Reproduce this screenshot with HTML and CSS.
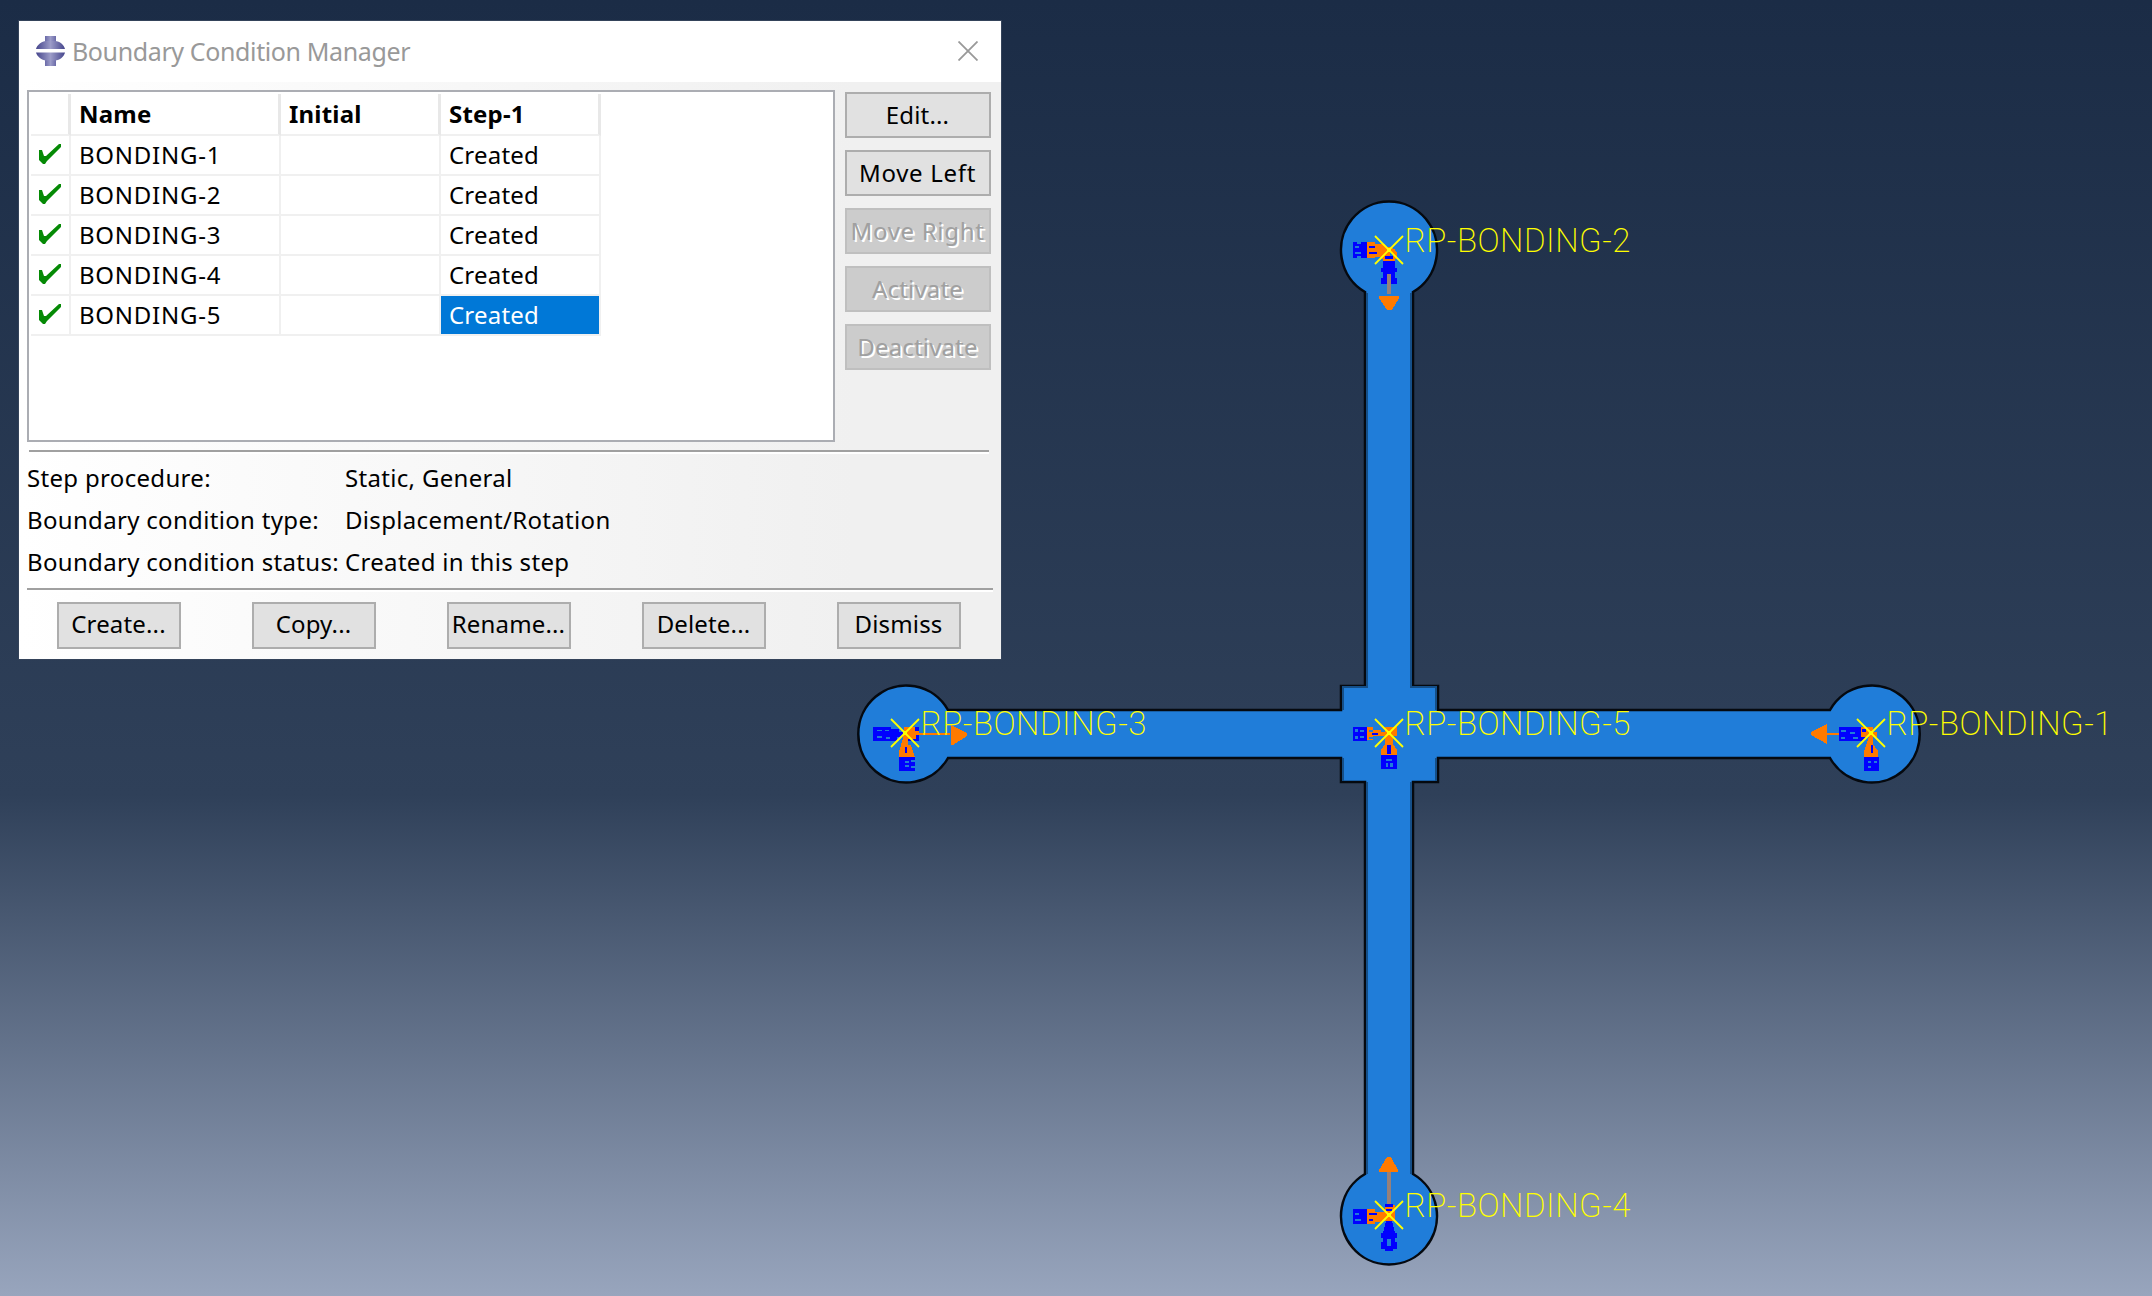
FILE: index.html
```
<!DOCTYPE html>
<html lang="en">
<head>
<meta charset="utf-8">
<title>Boundary Condition Manager</title>
<link rel="stylesheet" href="styles.css">
</head>
<body>
<main class="viewport">
<svg class="scene" width="2152" height="1296" viewBox="0 0 2152 1296">
  <defs>
    <path id="cross" class="rp" d="M-14-14L14 14M14-14L-14 14"/>
  </defs>
  <path class="part" d="M1365 292A48 48.500 0 1 1 1413 292V686H1438V710H1830A48 48.500 0 1 1 1830 758H1438V782H1413V1174A48 48.500 0 1 1 1365 1174V782H1341V758H948A48 48.500 0 1 1 948 710H1341V686H1365Z"/>
  <path class="shade" d="M1367 293V687H1343V710M1411 293V687H1436V710M1343 758V781M1436 758V781M1367 782V1174M1411 782V1174"/>

  <g shape-rendering="crispEdges">
    <g>
      <path class="blue" d="M1353 242h4v2h4v-2h6v16h-6v-2h-4v2h-4z"/>
      <path class="orange" d="M1367 242h8v2h9l6 5v8h-15v1h-8z"/>
      <path class="blue" d="M1369 246h6v2h-6zM1369 252h8v2h-8z"/>
      <path class="sky" d="M1355 246h4v2h-4zM1355 252h6v2h-6z"/>
      <circle class="ring" cx="1389" cy="255" r="6"/><path class="blue" d="M1385 256h8v3h-8zM1383 261h12v7h2v4h-2v6h2v6h-16v-6h2v-6h-2v-4h2z"/>
      <path class="stem" d="M1387 274h4v20h-4z"/><path class="orange" d="M1379 296h20v2l-7 12h-5l-8-12z"/>
    </g>
    <g>
      <path class="blue" d="M873 727h18v2h8v3h6v5h-8v4h-24z"/>
      <path class="sky" d="M877 730h5v1h-5zM885 730h4v1h-4zM877 736h5v2h-5zM886 737h4v2h-4z"/>
      <path class="blue" d="M908 727h11v14h-11z"/><path class="orange" d="M904 727h11v4h4v2h31v2h-34v4h-8v6h3l4 12v4h-16v-9l4-14z"/>
      <path class="blue" d="M905 747h2v6h-2zM899 757h16v14h-16z"/><path class="sky" d="M905 761h4v2h-4zM911 760h4v2h-4zM905 765h4v2h-4zM911 766h4v2h-4z"/>
      <path class="orange" d="M951 725l16 8v3l-14 9h-2z"/>
    </g>
    <g>
      <path class="blue" d="M1353 727h14v14h-14z"/><path class="sky" d="M1355 729h3v3h-3zM1360 730h4v2h-4zM1355 736h3v3h-3zM1360 736h4v2h-4z"/>
      <path class="orange" d="M1367 727h6v3h8v2h4v-5h12v9h-4v8l4 6v5h-16v-5l4-6v-8h-12v4h-6z"/>
      <path class="sky" d="M1369 730h4v2h-4zM1369 737h4v2h-4z"/>
      <path class="blue" d="M1372 733h6v2h-6zM1387 745h4v9h-4zM1381 755h16v14h-16z"/><path class="sky" d="M1386 759h6v2h-6zM1386 763h2v4h-2zM1390 763h3v4h-3z"/>
    </g>
    <g>
      <path class="blue" d="M1839 727h22v14h-22z"/><path class="sky" d="M1841 730h5v2h-5zM1850 732h5v2h-5zM1841 737h4v2h-4zM1853 737h5v2h-5z"/>
      <path class="orange" d="M1861 727h12v5h4v5h-4v7l5 7v6h-14v-6l5-14h-8zM1821 733h18v2h-18zM1827 724v20l-16-9v-3z"/>
      <path class="blue" d="M1862 729h4v3h-4zM1861 737h4v4h-4zM1871 745h2v8h-2zM1864 757h15v14h-15z"/><path class="sky" d="M1868 761h3v2h-3zM1874 761h3v2h-3zM1868 766h3v2h-3z"/>
    </g>
    <g>
      <path class="stem" d="M1387 1171h4v34h-4z"/><path class="orange" d="M1387 1157h4l7 13v2h-19v-2z"/>
      <path class="blue" d="M1353 1209h14v15h-14z"/><path class="sky" d="M1355 1213h4v2h-4zM1355 1219h6v2h-6z"/>
      <path class="orange" d="M1367 1209h8v3h10v-7h10v16h-14v1h-6v2h-8z"/>
      <path class="blue" d="M1369 1213h8v2h-8zM1369 1219h4v2h-4zM1385 1204h8v3h-8zM1386 1209h6v2h-6zM1386 1221h6l3 12h2v5h-2v4h2v7h-4v2h-8v-2h-4v-7h2v-4h-2v-5h2z"/>
      <path class="sky" d="M1387 1239h4v7h-4z"/>
    </g>
  </g>
  <use href="#cross" x="1389" y="250"/><use href="#cross" x="905" y="733"/><use href="#cross" x="1389" y="733"/><use href="#cross" x="1871" y="733"/><use href="#cross" x="1389" y="1215"/>
  <path class="yellow" d="M1387 248h4v4h-4zM903 731h4v4h-4zM1387 731h4v4h-4zM1869 731h4v4h-4zM1387 1213h4v4h-4z"/>
  <g class="labels">
    <text x="1404.500" y="251.500" textLength="226">RP-BONDING-2</text>
    <text x="920.500" y="734.500" textLength="226">RP-BONDING-3</text>
    <text x="1404.500" y="734.500" textLength="226">RP-BONDING-5</text>
    <text x="1886.500" y="734.500" textLength="226">RP-BONDING-1</text>
    <text x="1404.500" y="1216.500" textLength="226">RP-BONDING-4</text>
  </g>
</svg>

<section class="dialog">
  <header class="titlebar">
    <svg class="logo" width="29" height="30" viewBox="0 0 29 30">
      <defs>
        <linearGradient id="metal"><stop offset="0" stop-color="#45458c"/><stop offset=".5" stop-color="#9c9cc8"/><stop offset="1" stop-color="#45458c"/></linearGradient>
        <linearGradient id="pin"><stop offset="0" stop-color="#6a6aa8"/><stop offset=".5" stop-color="#9c9cc8"/><stop offset="1" stop-color="#6a6aa8"/></linearGradient>
      </defs>
      <path fill="url(#pin)" d="M9 0h11v8H9zM9 22h11v8H9z"/>
      <path fill="url(#metal)" d="M0 13C1 9 6 5 10 5h9c5 0 9 4 10 8zM0 16.500h29c-1 4-5 8-10 8h-9c-4 0-9-4-10-8z"/>
    </svg>
    <h1 class="title">Boundary Condition Manager</h1>
    <svg class="close" width="20" height="20" viewBox="0 0 20 20"><path d="M.5.5l19 19M19.500.5l-19 19"/></svg>
  </header>
  <div class="body">
    <div class="upper">
      <div class="list">
        <div class="grid">
          <div class="row head"><span></span><span>Name</span><span>Initial</span><span>Step-1</span></div>
          <div class="row"><span class="tick"><svg width="22" height="20" viewBox="0 0 22 20"><path d="M0 6h3l2 6h2L20 0h2v3L8 17l-2 3H4L0 16z"/></svg></span><span class="name">BONDING-1</span><span></span><span>Created</span></div>
          <div class="row"><span class="tick"><svg width="22" height="20" viewBox="0 0 22 20"><path d="M0 6h3l2 6h2L20 0h2v3L8 17l-2 3H4L0 16z"/></svg></span><span class="name">BONDING-2</span><span></span><span>Created</span></div>
          <div class="row"><span class="tick"><svg width="22" height="20" viewBox="0 0 22 20"><path d="M0 6h3l2 6h2L20 0h2v3L8 17l-2 3H4L0 16z"/></svg></span><span class="name">BONDING-3</span><span></span><span>Created</span></div>
          <div class="row"><span class="tick"><svg width="22" height="20" viewBox="0 0 22 20"><path d="M0 6h3l2 6h2L20 0h2v3L8 17l-2 3H4L0 16z"/></svg></span><span class="name">BONDING-4</span><span></span><span>Created</span></div>
          <div class="row"><span class="tick"><svg width="22" height="20" viewBox="0 0 22 20"><path d="M0 6h3l2 6h2L20 0h2v3L8 17l-2 3H4L0 16z"/></svg></span><span class="name">BONDING-5</span><span></span><span class="selected">Created</span></div>
        </div>
      </div>
      <div class="side">
        <button class="btn">Edit...</button>
        <button class="btn wide">Move Left</button>
        <button class="btn wide off">Move Right</button>
        <button class="btn off">Activate</button>
        <button class="btn off">Deactivate</button>
      </div>
    </div>
    <div class="rule first"></div>
    <dl class="info">
      <dt>Step procedure:</dt><dd>Static, General</dd>
      <dt>Boundary condition type:</dt><dd>Displacement/Rotation</dd>
      <dt>Boundary condition status:</dt><dd>Created in this step</dd>
    </dl>
    <div class="rule"></div>
    <div class="actions">
      <button class="btn">Create...</button>
      <button class="btn">Copy...</button>
      <button class="btn">Rename...</button>
      <button class="btn">Delete...</button>
      <button class="btn">Dismiss</button>
    </div>
  </div>
</section>
</main>
</body>
</html>
```
FILE: styles.css
```
* { box-sizing: border-box; }
body { margin: 0; font-family: "Noto Sans", "Open Sans", sans-serif; font-size: 24px; color: #000; }
.viewport {
  position: relative; width: 2152px; height: 1296px; overflow: hidden;
  background: linear-gradient(#1b2c46 0, #2f4059 795px, #98a5bd 1296px);
}
.scene { display: block; }
.part { fill: #207dd9; stroke: #05090f; stroke-width: 2.5; }
.shade { fill: none; stroke: #154f88; stroke-width: 2; }
.rp { stroke: #ff0; stroke-width: 1.8; fill: none; }
.yellow { fill: #ff0; }
.blue { fill: #00f; }
.orange { fill: #ff7a00; }
.sky { fill: #207dd9; }
.stem { fill: #97807a; }
.ring { fill: none; stroke: #ff7a00; stroke-width: 4; }
.labels text { fill: #ff0; font-family: Roboto, sans-serif; font-weight: 200; font-size: 33px; }

.dialog {
  position: absolute; left: 19px; top: 21px; width: 982px; height: 638px;
  background: linear-gradient(90deg, #fff, #f0f0f0 85%);
  box-shadow: 0 0 0 1px #34435a;
}
.titlebar { height: 61px; background: #fff; display: flex; align-items: center; padding: 0 23px 2px 17px; }
.logo { flex: none; }
.title { margin: 0 auto 0 7px; font-size: 25px; font-weight: 400; letter-spacing: -.38px; color: #999; line-height: 34px; white-space: nowrap; }
.close { stroke: #999; stroke-width: 1.8; fill: none; }
.body { padding: 8px 8px 0; }
.upper { display: flex; gap: 10px; }
.list { width: 808px; height: 352px; border: 2px solid #abadb3; background: #fff; padding: 2px; }
.grid { width: 570px; }
.row { display: grid; grid-template-columns: 40px 210px 160px 160px; height: 40px; letter-spacing: .2px; }
.row span { border-right: 2px solid #f0f0f0; border-bottom: 2px solid #f0f0f0; padding-left: 8px; line-height: 37px; white-space: nowrap; }
.row .name { letter-spacing: .75px; }
.row.head { height: 42px; font-weight: 700; }
.row.head span { border-right: 3px solid #e8e8e8; line-height: 40px; }
.row .tick { padding: 8px 0 0 8px; line-height: 0; }
.tick path { fill: #058a05; }
.row .selected { background: #0078d7; background-clip: padding-box; color: #fff; }
.side { display: flex; flex-direction: column; gap: 12px; padding-top: 2px; }
.btn {
  font: inherit; color: inherit; padding: 0 1px 1px 0; border: 2px solid #adadad; background: #e1e1e1;
  height: 46px; width: 146px; line-height: 40px; letter-spacing: .15px; white-space: nowrap; display: flex; align-items: center; justify-content: center;
}
.btn.wide { letter-spacing: .7px; }
.btn.off { background: #ccc; border-color: #bfbfbf; color: #a0a0a0; text-shadow: 2px 2px 0 #fff; }
.rule { height: 4px; background: #fff; border-top: 2px solid #a0a0a0; }
.rule.first { margin: 8px 4px 0 2px; }
.info { margin: 3px 0 0; height: 131px; display: grid; grid-template-columns: 318px auto; grid-auto-rows: 42px; line-height: 42px; white-space: nowrap; }
.info dt { letter-spacing: .32px; }
.info dd { margin: 0; letter-spacing: .32px; }
.actions { display: flex; justify-content: space-between; padding: 10px 32px 0 30px; }
.actions .btn { width: 124px; height: 47px; padding-bottom: 3px; }
```
